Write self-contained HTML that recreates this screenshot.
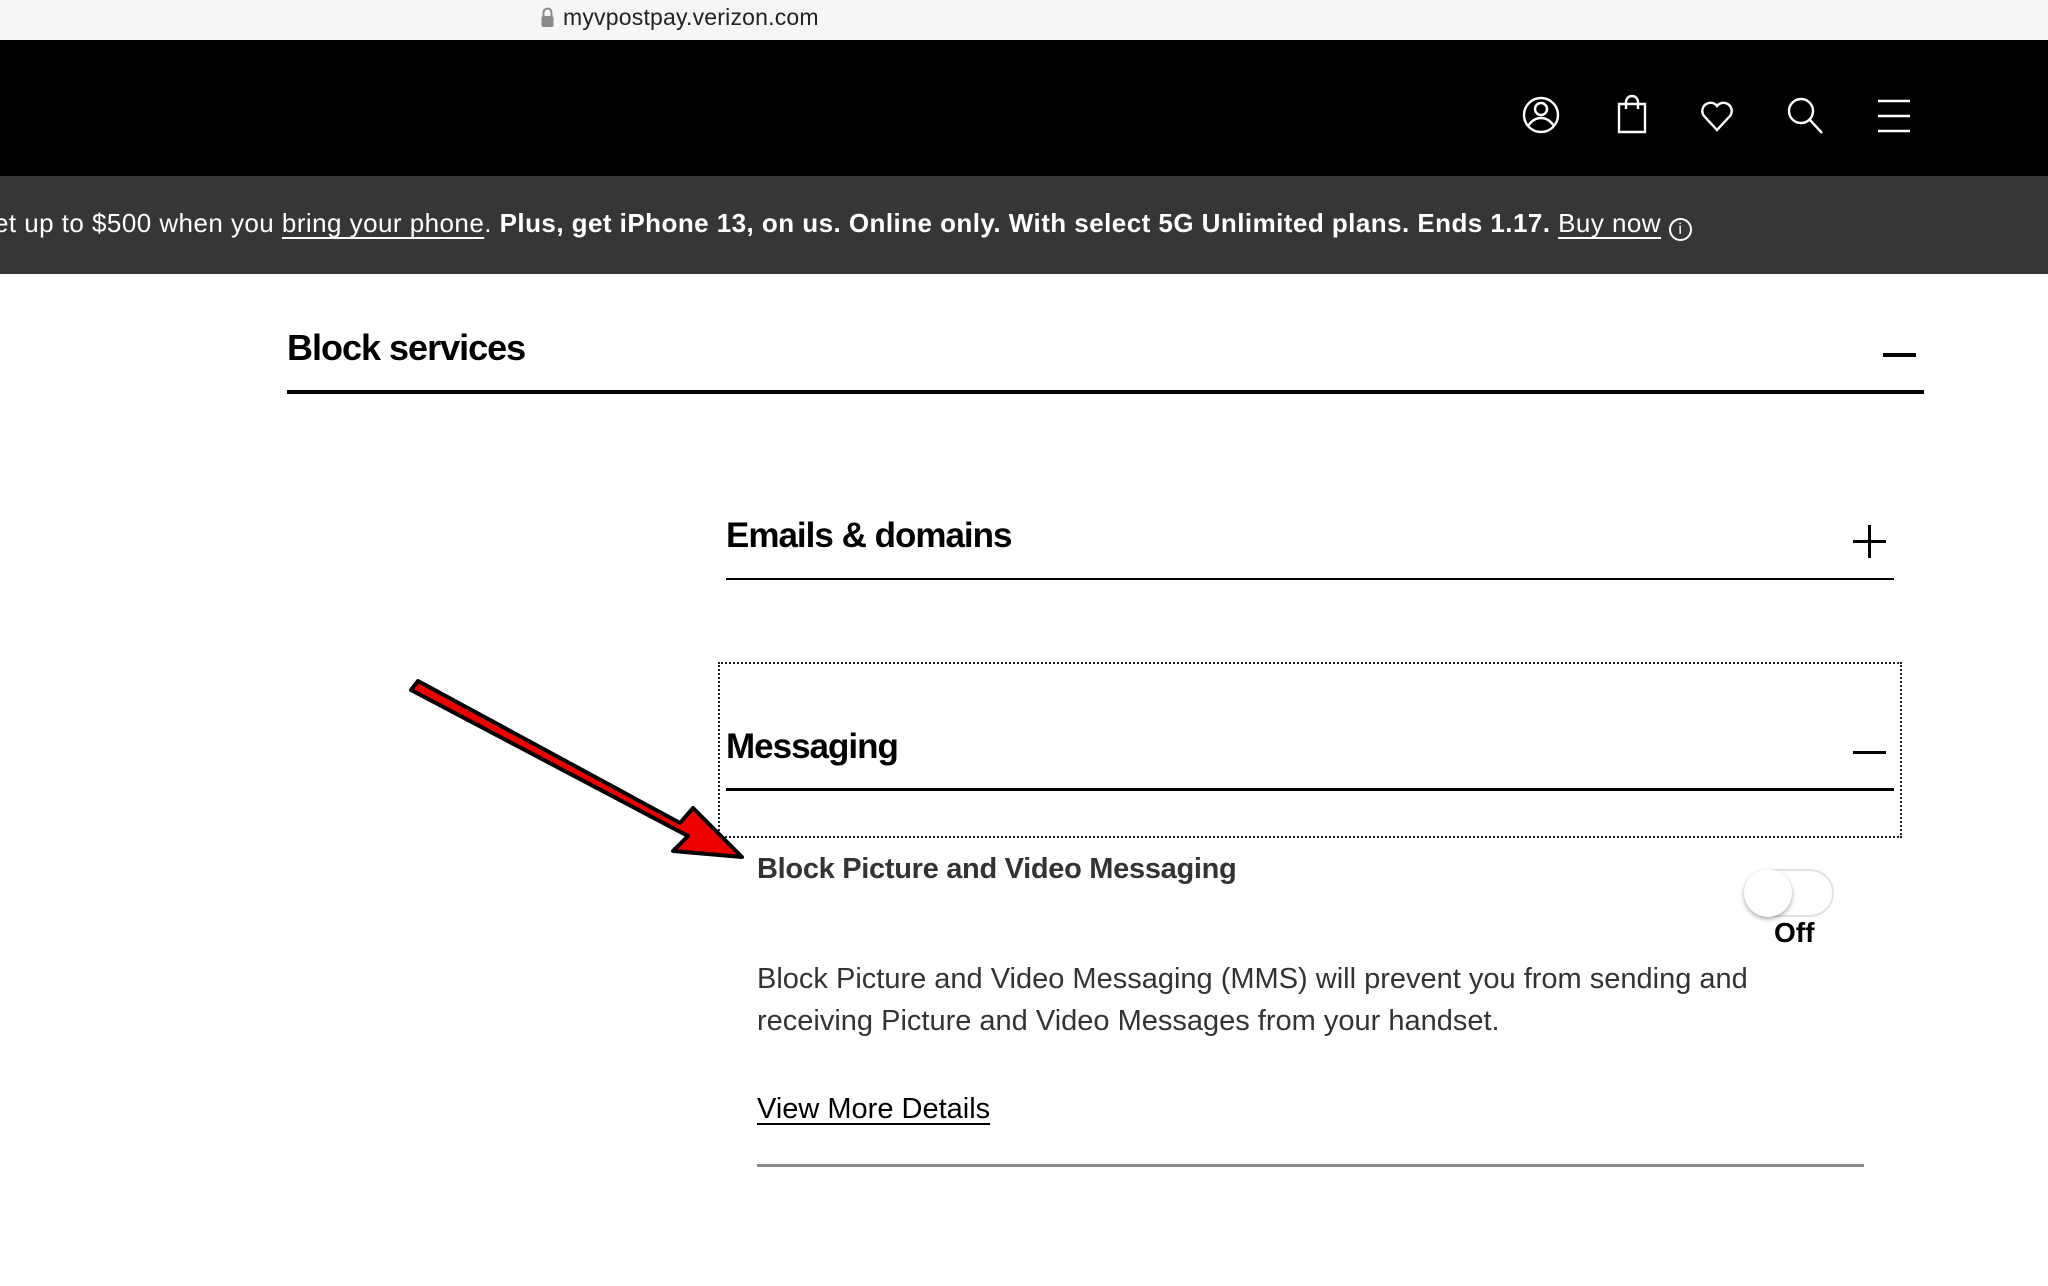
<!DOCTYPE html>
<html><head><meta charset="utf-8"><style>
*{margin:0;padding:0;box-sizing:border-box}
body{width:2048px;height:1286px;position:relative;background:#fff;font-family:"Liberation Sans",Arial,sans-serif;overflow:hidden}
.abs{position:absolute}
#url{left:0;top:0;width:2048px;height:40px;background:#f6f6f6}
#hdr{left:0;top:40px;width:2048px;height:136px;background:#000}
#promo{left:0;top:176px;width:2048px;height:98px;background:#363636;color:#fff;font-size:26px;white-space:nowrap;letter-spacing:0.45px}
u{text-underline-offset:5px;text-decoration-thickness:2px}
.h{font-weight:bold;color:#000;letter-spacing:-1px}
</style></head><body>
<div id="url" class="abs">
  <svg class="abs" style="left:540px;top:6px" width="15" height="22" viewBox="0 0 15 22"><path d="M3.5 10V6.5a4 4 0 0 1 8 0V10" fill="none" stroke="#8a8a8a" stroke-width="2"/><rect x="1.5" y="10" width="12" height="11" rx="2" fill="#8a8a8a"/></svg>
  <div class="abs" style="left:563px;top:4px;font-size:23px;color:#222;letter-spacing:0.2px">myvpostpay.verizon.com</div>
</div>
<div id="hdr" class="abs">
  <svg class="abs" style="left:1520px;top:52px" width="400" height="46" viewBox="0 0 400 46" fill="none" stroke="#fff" stroke-width="2.4">
    <circle cx="21" cy="23" r="17"/><circle cx="21" cy="17" r="6"/><path d="M8 34c4-6 9-8 13-8s9 2 13 8"/>
    <path d="M99 12h26v28h-26z"/><path d="M106 17v-7a6 6 0 0 1 12 0v7"/>
    <path d="M197 38L184 24a8 8 0 0 1 13-10a8 8 0 0 1 13 10z"/>
    <circle cx="281" cy="19" r="12"/><path d="M290 28l12 13"/>
    <path d="M358 9h32M358 24h32M358 39h32"/>
  </svg>
</div>
<div id="promo" class="abs"><div class="abs" style="left:-6px;top:32px">et up to $500 when you <u>bring your phone</u>. <b>Plus, get iPhone 13, on us. Online only. With select 5G Unlimited plans. Ends 1.17.</b> <u>Buy now</u> <span style="display:inline-block;width:23px;height:23px;border:2px solid #fff;border-radius:50%;font-size:16px;text-align:center;line-height:20px;vertical-align:-2px;letter-spacing:0">i</span></div></div>

<div class="abs h" style="left:287px;top:327px;font-size:36px">Block services</div>
<div class="abs" style="left:1883px;top:353px;width:33px;height:4px;background:#000"></div>
<div class="abs" style="left:287px;top:390px;width:1637px;height:4px;background:#000"></div>

<div class="abs h" style="left:726px;top:516px;font-size:35px">Emails &amp; domains</div>
<div class="abs" style="left:1853px;top:540px;width:33px;height:3px;background:#000"></div>
<div class="abs" style="left:1868px;top:525px;width:3px;height:33px;background:#000"></div>
<div class="abs" style="left:726px;top:578px;width:1168px;height:2px;background:#000"></div>

<div class="abs" style="left:718px;top:662px;width:1184px;height:176px;border:2px dotted #222"></div>
<div class="abs h" style="left:726px;top:727px;font-size:35px">Messaging</div>
<div class="abs" style="left:1853px;top:751px;width:33px;height:3px;background:#000"></div>
<div class="abs" style="left:726px;top:788px;width:1168px;height:3px;background:#000"></div>

<div class="abs" style="left:757px;top:853px;font-size:29px;font-weight:bold;color:#333;letter-spacing:-0.3px">Block Picture and Video Messaging</div>
<div class="abs" style="left:1744px;top:869px;width:90px;height:48px;border:2px solid #e2e2e2;border-radius:24px;background:#fff"></div>
<div class="abs" style="left:1744px;top:869px;width:48px;height:48px;border-radius:50%;background:#fff;box-shadow:0 2px 4px rgba(0,0,0,.35)"></div>
<div class="abs" style="left:1774px;top:917px;font-size:28px;font-weight:bold;color:#000">Off</div>

<div class="abs" style="left:757px;top:958px;font-size:29px;line-height:42px;color:#333;width:1100px">Block Picture and Video Messaging (MMS) will prevent you from sending and<br>receiving Picture and Video Messages from your handset.</div>
<div class="abs" style="left:757px;top:1093px;font-size:29px;color:#000"><u>View More Details</u></div>
<div class="abs" style="left:757px;top:1164px;width:1107px;height:3px;background:#8a8a8a"></div>

<svg class="abs" style="left:0;top:0" width="2048" height="1286" viewBox="0 0 2048 1286">
  <path d="M411 690 L688 836 L673 851 L742 857 L693 808 L680 823 L418 681 Z" fill="#e00" stroke="#000" stroke-width="4" stroke-linejoin="round"/>
</svg>
</body></html>
